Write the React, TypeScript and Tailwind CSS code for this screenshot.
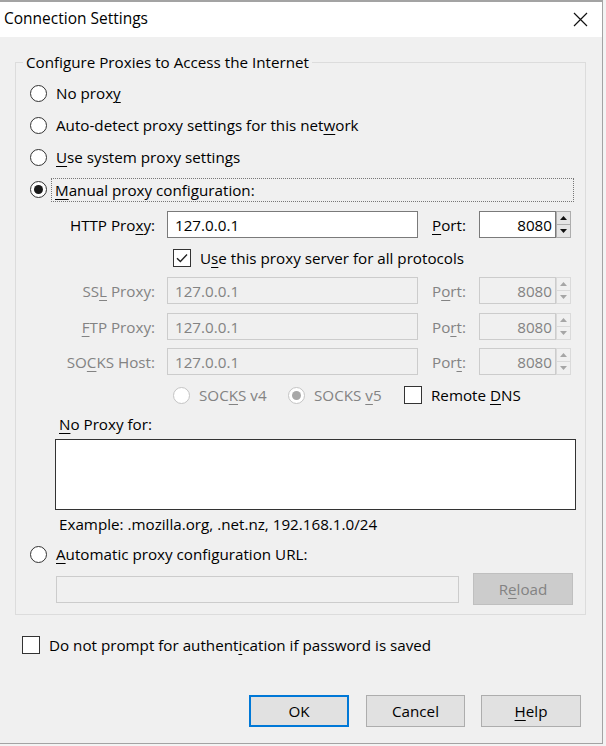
import React from "react";

const U = ({ children }: { children: React.ReactNode }) => (
  <span className="underline underline-offset-[3px] decoration-1">{children}</span>
);

const Radio = ({ checked = false, disabled = false }: { checked?: boolean; disabled?: boolean }) => (
  <span
    className={`flex h-[17px] w-[17px] shrink-0 items-center justify-center rounded-full border bg-white ${
      disabled ? "border-[#c4c4c4]" : "border-[#333333]"
    }`}
  >
    {checked && (
      <span className={`h-[9px] w-[9px] rounded-full ${disabled ? "bg-[#a8a8a8]" : "bg-[#1a1a1a]"}`} />
    )}
  </span>
);

const Checkbox = ({ checked = false }: { checked?: boolean }) => (
  <span className="flex h-[18px] w-[18px] shrink-0 items-center justify-center border border-[#333333] bg-white">
    {checked && (
      <svg width="14" height="14" viewBox="0 0 14 14" fill="none">
        <path d="M2 7.2 L5.4 10.6 L12 3.6" stroke="#222" strokeWidth="1.4" />
      </svg>
    )}
  </span>
);

const Spinner = ({ disabled = false }: { disabled?: boolean }) => {
  const c = disabled ? "#a6a6a6" : "#111";
  const b = disabled ? "border-[#dadada] bg-[#f0f0f0]" : "border-[#adadad] bg-[#e5e5e5]";
  return (
    <div className="flex h-[27px] w-[15px] flex-col">
      <div className={`flex flex-1 items-center justify-center border ${b}`}>
        <svg width="7" height="4" viewBox="0 0 7 4">
          <path d="M0 4 L3.5 0 L7 4 Z" fill={c} />
        </svg>
      </div>
      <div className={`flex flex-1 items-center justify-center border border-t-0 ${b}`}>
        <svg width="7" height="4" viewBox="0 0 7 4">
          <path d="M0 0 L7 0 L3.5 4 Z" fill={c} />
        </svg>
      </div>
    </div>
  );
};

const ProxyRow = ({
  label,
  port,
  disabled = false,
  className = "",
}: {
  label: React.ReactNode;
  port: React.ReactNode;
  disabled?: boolean;
  className?: string;
}) => {
  const text = disabled ? "text-[#838383]" : "text-black";
  const box = disabled ? "border-[#cccccc] bg-[#f0f0f0] text-[#838383]" : "border-[#7a7a7a] bg-white text-black";
  return (
    <div className={`flex h-[27px] items-center ${className}`}>
      <div className={`w-[125px] text-right ${text}`}>{label}</div>
      <div className={`ml-[12px] flex h-[27px] w-[251px] items-center border pl-[7px] ${box}`}>127.0.0.1</div>
      <div className={`ml-[14px] w-[47px] ${text}`}>{port}</div>
      <div className={`flex h-[27px] w-[77px] items-center justify-end border pr-[3px] ${box}`}>8080</div>
      <Spinner disabled={disabled} />
    </div>
  );
};

const Button = ({
  children,
  primary = false,
  className = "",
}: {
  children: React.ReactNode;
  primary?: boolean;
  className?: string;
}) => (
  <button
    className={`flex h-[32px] items-center justify-center bg-[#e1e1e1] text-black ${
      primary ? "border-2 border-[#0078d7]" : "border border-[#adadad]"
    } ${className}`}
  >
    {children}
  </button>
);

export default function App() {
  return (
    <div className="h-[746px] w-[606px] overflow-hidden bg-[#f3f3f3] font-['Segoe_UI','Open_Sans',sans-serif] text-[15.2px] leading-[20px] text-black">
      <div className="h-[744px] w-[603px] border-r border-b border-t-2 border-[#a3a3a3] bg-[#f0f0f0]">
        {/* title bar */}
        <div className="flex h-[35px] items-center justify-between bg-white pb-[3px] pl-[4px] pr-[14px]">
          <span className="text-[15.5px]">Connection Settings</span>
          <svg width="15" height="15" viewBox="0 0 15 15" className="mt-[2px]">
            <path d="M1 1 L14 14 M14 1 L1 14" stroke="#111" strokeWidth="1.2" />
          </svg>
        </div>

        <fieldset className="ml-[15px] mt-[15px] w-[571px] border border-[#dcdcdc] pb-[9px]">
          <legend className="ml-[7px] px-[3px]">Configure Proxies to Access the Internet</legend>

          <div className="pl-[14px]">
            <div className="mt-[5px] flex h-[32px] items-center gap-[9px]">
              <Radio />
              <span>
                No prox<U>y</U>
              </span>
            </div>
            <div className="flex h-[32px] items-center gap-[9px]">
              <Radio />
              <span>
                Auto-detect proxy settings for this net<U>w</U>ork
              </span>
            </div>
            <div className="flex h-[32px] items-center gap-[9px]">
              <Radio />
              <span>
                <U>U</U>se system proxy settings
              </span>
            </div>
            <div className="flex h-[33px] items-center gap-[4px]">
              <Radio checked />
              <span className="flex h-[24px] w-[523px] items-center border border-dotted border-[#777] pl-[3px]">
                <span>
                  <U>M</U>anual proxy configuration:
                </span>
              </span>
            </div>

            <ProxyRow
              className="mt-[5px]"
              label={
                <>
                  HTTP Pro<U>x</U>y:
                </>
              }
              port={
                <>
                  <U>P</U>ort:
                </>
              }
            />

            <div className="flex h-[39px] items-center pl-[143px]">
              <Checkbox checked />
              <span className="ml-[9px]">
                U<U>s</U>e this proxy server for all protocols
              </span>
            </div>

            <ProxyRow
              disabled
              label={
                <>
                  SS<U>L</U> Proxy:
                </>
              }
              port={
                <>
                  P<U>o</U>rt:
                </>
              }
            />
            <ProxyRow
              disabled
              className="mt-[9px]"
              label={
                <>
                  <U>F</U>TP Proxy:
                </>
              }
              port={
                <>
                  Po<U>r</U>t:
                </>
              }
            />
            <ProxyRow
              disabled
              className="mt-[8px]"
              label={
                <>
                  SO<U>C</U>KS Host:
                </>
              }
              port={
                <>
                  Por<U>t</U>:
                </>
              }
            />

            <div className="mt-[8px] flex h-[24px] items-center pl-[143px]">
              <Radio disabled />
              <span className="ml-[9px] w-[89px] text-[#838383]">
                SOC<U>K</U>S v4
              </span>
              <Radio disabled checked />
              <span className="ml-[9px] w-[90px] text-[#838383]">
                SOCKS <U>v</U>5
              </span>
              <Checkbox />
              <span className="ml-[9px]">
                Remote <U>D</U>NS
              </span>
            </div>

            <div className="mt-[7px] pl-[29px]">
              <U>N</U>o Proxy for:
            </div>
            <div className="ml-[25px] mt-[5px] h-[71px] w-[521px] border border-[#333] bg-white" />
            <div className="mt-[4px] pl-[29px]">Example: .mozilla.org, .net.nz, 192.168.1.0/24</div>

            <div className="mt-[6px] flex h-[28px] items-center gap-[9px]">
              <Radio />
              <span>
                <U>A</U>utomatic proxy configuration URL:
              </span>
            </div>

            <div className="mt-[5px] flex h-[32px] items-center pl-[26px]">
              <div className="h-[27px] w-[403px] border border-[#cccccc] bg-[#f0f0f0]" />
              <div className="ml-[14px] flex h-[32px] w-[100px] items-center justify-center border border-[#bfbfbf] bg-[#cccccc] text-[#838383]">
                <span>
                  R<U>e</U>load
                </span>
              </div>
            </div>
          </div>
        </fieldset>

        <div className="mt-[20px] flex items-center pl-[22px]">
          <Checkbox />
          <span className="ml-[9px]">
            Do not prompt for authent<U>i</U>cation if password is saved
          </span>
        </div>

        <div className="mt-[40px] flex justify-end pr-[21px]">
          <Button primary className="w-[100px]">
            OK
          </Button>
          <Button className="ml-[17px] w-[99px]">Cancel</Button>
          <Button className="ml-[16px] w-[100px]">
            <span>
              <U>H</U>elp
            </span>
          </Button>
        </div>
      </div>
    </div>
  );
}
